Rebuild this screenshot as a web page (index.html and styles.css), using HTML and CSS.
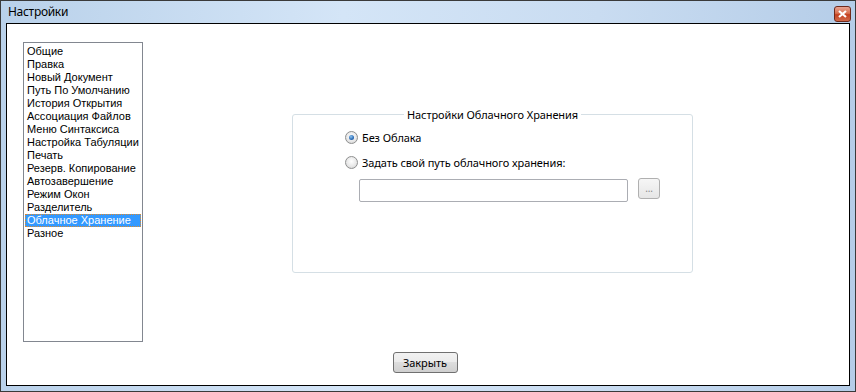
FILE: index.html
```html
<!DOCTYPE html>
<html lang="ru">
<head>
    <meta charset="UTF-8">
    <title>Настройки</title>
    <link rel="stylesheet" href="styles.css">
</head>
<body>
    <div class="window">
        <div class="titlebar">
            <span class="title">Настройки</span>
            <span class="close-x">
                <svg width="9" height="8" viewBox="0 0 9 8">
                    <path d="M1 1 L8 7 M8 1 L1 7" stroke="#fff" stroke-width="2.2" fill="none"/>
                </svg>
            </span>
        </div>
        <div class="client">
            <div class="content-row">
                <ul class="listbox">
                    <li>Общие</li>
                    <li>Правка</li>
                    <li>Новый Документ</li>
                    <li>Путь По Умолчанию</li>
                    <li>История Открытия</li>
                    <li>Ассоциация Файлов</li>
                    <li>Меню Синтаксиса</li>
                    <li>Настройка Табуляции</li>
                    <li>Печать</li>
                    <li>Резерв. Копирование</li>
                    <li>Автозавершение</li>
                    <li>Режим Окон</li>
                    <li>Разделитель</li>
                    <li class="selected">Облачное Хранение</li>
                    <li>Разное</li>
                </ul>
                <fieldset class="group">
                    <legend>Настройки Облачного Хранения</legend>
                    <div class="radio-row first">
                        <span class="radio checked"></span>
                        <span>Без Облака</span>
                    </div>
                    <div class="radio-row">
                        <span class="radio"></span>
                        <span>Задать свой путь облачного хранения:</span>
                    </div>
                    <div class="path-row">
                        <div class="path-input"></div>
                        <div class="browse-btn">...</div>
                    </div>
                </fieldset>
            </div>
            <div class="footer">
                <div class="close-btn">Закрыть</div>
            </div>
        </div>
    </div>
</body>
</html>
```

FILE: styles.css
```css
body {
    margin: 0;
    font-family: 'Noto Sans', 'Open Sans', sans-serif;
    font-size: 11px;
    letter-spacing: -0.1px;
    color: #000;
}
.window {
    width: 856px;
    height: 392px;
    box-sizing: border-box;
    border: 1px solid #3a3a3a;
    background: linear-gradient(to right, #b9d1ea 0%, #d4e5f7 40%, #c9dcf1 70%, #b5cde8 100%);
    padding: 0 5px 5px 5px;
    display: flex;
    flex-direction: column;
}
.titlebar {
    height: 22px;
    display: flex;
    align-items: center;
    justify-content: space-between;
}
.title {
    padding-left: 2px;
    margin-top: -2px;
    font-size: 12px;
    letter-spacing: -0.3px;
}
.close-x {
    width: 15px;
    height: 14px;
    margin-top: 3px;
    margin-right: -1px;
    border: 1px solid #6f2a1c;
    border-radius: 3px;
    background: linear-gradient(to bottom, #e8a493 0%, #d8704f 45%, #c4401f 55%, #d06a4a 100%);
    display: flex;
    align-items: center;
    justify-content: center;
}
.client {
    flex: 1;
    background: #fff;
    border: 1px solid #000;
    display: flex;
    flex-direction: column;
}
.content-row {
    display: flex;
    align-items: flex-start;
}
.listbox {
    list-style: none;
    box-sizing: border-box;
    margin: 18px 0 0 16px;
    padding: 2px 1px;
    width: 120px;
    height: 300px;
    border: 1px solid #828790;
    font-family: 'Liberation Sans', sans-serif;
    font-size: 11px;
    letter-spacing: 0;
}
.listbox li {
    height: 13px;
    line-height: 13px;
    padding-left: 2px;
    white-space: nowrap;
}
.listbox li.selected {
    background: #3399ff;
    color: #fff;
    outline: 1px dotted #e08a2a;
    outline-offset: -1px;
}
.group {
    margin: 83px 0 0 149px;
    width: 401px;
    height: 166px;
    box-sizing: border-box;
    border: 1px solid #d5dfe5;
    border-radius: 3px;
    padding: 0;
}
.group legend {
    margin: 0 auto;
    padding: 0 3px;
    line-height: 15px;
}
.radio-row {
    display: flex;
    align-items: center;
    gap: 4px;
    margin-left: 52px;
    height: 16px;
}
.radio-row.first {
    margin-top: 7px;
    margin-bottom: 9px;
}
.radio {
    width: 11px;
    height: 11px;
    border: 1px solid #8e8f8f;
    border-radius: 50%;
    background: radial-gradient(circle at 50% 40%, #ffffff 0%, #e6e6e6 60%, #c8c8c8 100%);
    position: relative;
}
.radio.checked::after {
    content: '';
    position: absolute;
    left: 3px;
    top: 3px;
    width: 5px;
    height: 5px;
    border-radius: 50%;
    background: radial-gradient(circle at 40% 35%, #8fc6f0 0%, #2a6ab5 60%, #1d4e8e 100%);
}
.path-row {
    display: flex;
    align-items: flex-start;
    margin: 9px 0 0 66px;
    gap: 10px;
}
.path-input {
    width: 267px;
    height: 21px;
    border: 1px solid #abadb3;
    border-radius: 2px;
}
.browse-btn {
    width: 20px;
    height: 19px;
    margin-top: -1px;
    border: 1px solid #b0b0b0;
    border-radius: 3px;
    background: linear-gradient(to bottom, #f6f6f6, #e6e6e6);
    color: #8a8a8a;
    font-size: 10px;
    text-align: center;
    line-height: 19px;
}
.footer {
    display: flex;
    justify-content: center;
    margin-top: 10px;
    padding-right: 6px;
}
.close-btn {
    width: 63px;
    height: 19px;
    border: 1px solid #707070;
    border-radius: 3px;
    background: linear-gradient(to bottom, #f2f2f2 0%, #ebebeb 45%, #dddddd 50%, #cfcfcf 100%);
    text-align: center;
    line-height: 19px;
}
```
